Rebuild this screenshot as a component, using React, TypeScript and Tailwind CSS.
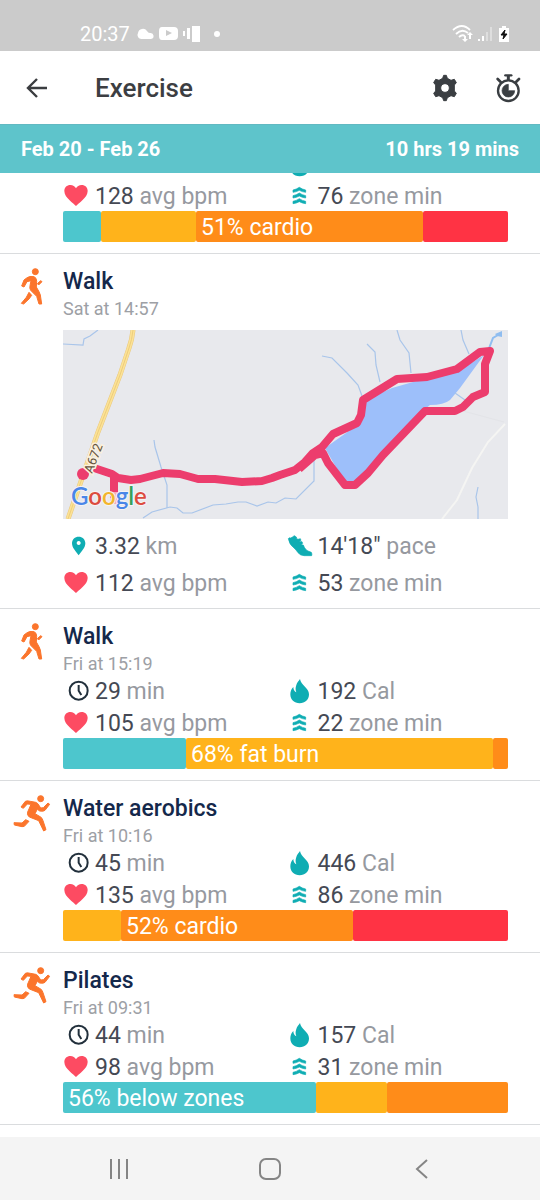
import type { ReactNode } from "react";

type Zone = { size: number; color: string; label?: string };

type StatData = { icon: ReactNode; value?: string; unit?: string };

const TEAL = "bg-[#4dc6cd]";
const YELLOW = "bg-[#ffb31b]";
const ORANGE = "bg-[#ff8c19]";
const RED = "bg-[#ff3344]";

/* ---------- stat icons ---------- */

function StatIcon({ children }: { children: ReactNode }) {
  return (
    <svg viewBox="0 0 84 84" className="h-7 w-7 shrink-0" aria-hidden="true">
      {children}
    </svg>
  );
}

const heart = (
  <StatIcon>
    <path
      fill="#fd4b62"
      d="M39 72 C33 64 4 48 4 27 C4 16 12 9 22 9 C30 9 36 13 39 19 C42 13 48 9 56 9 C66 9 74 16 74 27 C74 48 45 64 39 72Z"
    />
  </StatIcon>
);

const zone = (
  <StatIcon>
    <g fill="#0fadb3" stroke="#0fadb3" strokeWidth="2" strokeLinejoin="round">
      <path d="M40 16 Q49 22 59 24 V31 Q49 30 40 25 Q31 30 21 31 V24 Q31 22 40 16Z" />
      <path d="M40 33 Q49 39 59 41 V48 Q49 47 40 42 Q31 47 21 48 V41 Q31 39 40 33Z" />
      <path d="M40 50 Q49 56 59 58 V65 Q49 64 40 59 Q31 64 21 65 V58 Q31 56 40 50Z" />
    </g>
  </StatIcon>
);

const flame = (
  <StatIcon>
    <path
      fill="#0fadb3"
      d="M42 6 C44 24 69 33 69 52 C69 68 57 79 41 79 C25 79 13 68 13 52 C13 43 16 36 22 30 C22 37 25 43 31 46 C28 38 28 32 31 24 C33 17 38 12 42 6Z"
    />
  </StatIcon>
);

const clock = (
  <StatIcon>
    <g fill="none" stroke="#22303c" strokeWidth="6">
      <circle cx="47" cy="41" r="27" />
      <path d="M47 24 V41 L55 54" />
    </g>
  </StatIcon>
);

const pin = (
  <StatIcon>
    <path
      fill="#0fadb3"
      fillRule="evenodd"
      d="M47 70 C38 58 27 47 27 34 C27 22 36 14 47 14 C58 14 67 22 67 34 C67 47 56 58 47 70Z M47 27 a6 6 0 1 0 0.1 0Z"
    />
  </StatIcon>
);

const shoe = (
  <StatIcon>
    <path
      fill="#0fadb3"
      stroke="#0fadb3"
      strokeWidth="2"
      strokeLinejoin="round"
      d="M7 20 Q9 16 14 18 Q20 15 25 11 L31 15 Q31 22 36 22 L43 20 L45 25 L40 29 L48 29 L50 34 L45 38 L52 39 L55 46 Q60 55 66 57 L76 61 Q79 66 77 71 H54 Q42 70 36 62 Q30 53 24 48 Q10 38 7 20Z"
    />
  </StatIcon>
);

/* ---------- activity icons ---------- */

function WalkIcon() {
  return (
    <svg viewBox="0 0 72 117" className="h-[39px] w-6" aria-hidden="true">
      <g fill="#fb752c" stroke="#fb752c" strokeWidth="3" strokeLinejoin="round">
        <circle cx="46" cy="14" r="9" />
        <path d="M20 33 Q28 26 42 29 Q50 32 50 43 L49 60 Q59 76 61 84 L65 111 H57 L50 88 L32 70 Q28 64 30 56 L33 41 L21 44 L12 60 L5 57 L12 39Z" />
        <path d="M27 76 L35 85 L27 96 L11 111 L4 109 L19 91Z" />
        <path d="M52 50 L62 41 L66 44 L56 54Z" />
      </g>
    </svg>
  );
}

function RunIcon() {
  return (
    <svg viewBox="0 0 114 117" className="h-[39px] w-[38px]" aria-hidden="true">
      <g fill="#fb752c" stroke="#fb752c" strokeWidth="3" strokeLinejoin="round">
        <circle cx="83" cy="14" r="9" />
        <path d="M24 39 L37 22 Q42 19 52 22 L68 25 Q74 27 78 34 L83 42 L91 41 L105 27 L110 31 L96 49 Q92 53 80 51 L73 46 L66 59 L83 69 Q88 72 90 80 L99 107 L92 111 L77 80 L49 69 Q41 63 44 54 L54 31 L43 30 L31 43Z" />
        <path d="M3 86 L27 87 L38 77 L48 82 L34 97 L27 98 L4 93Z" />
      </g>
    </svg>
  );
}

/* ---------- route map ---------- */

function RouteMap() {
  return (
    <svg viewBox="0 0 445 189" className="mt-2.5 block w-full bg-[#e8e9ed]" role="img" aria-label="Route map">
      <path
        fill="#9dbffa"
        d="M262 118 L297 93 L302 70 L329 58 L350 52 L394 42 L421 25 L397 58 L387 70 Q381 75 367 75 L362 79 L320 125 L292 153 L282 153Z"
      />
      <g fill="none" stroke="#a9c5ea" strokeWidth="1.2">
        <path d="M0 14 L20 15 L21 9 L27 6 L35 0" />
        <path d="M91 110 L92 117 L98 137 L104 155 V178" />
        <path d="M80 188 L89 182 L107 177 L114 178 L120 183 L129 183 L150 175 L163 174 L175 172 L183 172 L194 176 L205 172 L213 173 L222 168 L233 169 L251 151 V130" />
        <path d="M259 26 L269 28 L284 43 L295 55 L299 66" />
        <path d="M304 14 L312 22 L313 35 L317 52" />
        <path d="M334 0 L337 10 L346 23 L348 43" />
        <path d="M398 0 L400 10 L406 24" />
        <path d="M392 63 L402 70" />
        <path d="M415 157 L413 167 L415 177 V189" />
      </g>
      <path d="M425 21 L430 8 L435 5" fill="none" stroke="#8fbdf0" strokeWidth="2" />
      <path d="M432 4 L439 1 V7 L434 6Z" fill="#8fbdf0" />
      <path d="M400 81 L441 92" stroke="#e3e4e8" strokeWidth="1" />
      <path d="M442 94 L425 112 L409 138 L394 170 L379 189" fill="none" stroke="#f5f5f3" strokeWidth="2" />
      <g fill="none">
        <path d="M70 0 Q69 10 66 18 L57 45 L35 102 L5 189" stroke="#e9c87c" strokeWidth="5" />
        <path d="M70 0 Q69 10 66 18 L57 45 L35 102 L5 189" stroke="#fce296" strokeWidth="4" />
        <path d="M70 0 Q69 10 66 18 L57 45 L35 102 L5 189" stroke="#edcd7c" strokeWidth="1" />
      </g>
      <circle cx="20" cy="144" r="6" fill="#ec3d6d" />
      <g fill="none" stroke="#ec3d6d" strokeWidth="8" strokeLinejoin="round">
        <path d="M31 138 L49 144 L55 148 L68 150 L77 149 L100 143 L117 144 L135 149 L152 149 L179 152 L199 151 L209 148 L217 145 L232 140 L242 132 L250 123 L259 117 L270 104 L294 93 L298 85 L300 70 L334 49 L364 47 L394 39 L417 22 L427 21 L422 34 V62 L410 67 L400 77 L392 81 H362 L320 125 L305 143 L292 155 H282 L265 133 L260 123 L252 125 L236 139" />
        <path d="M51 145 V168" />
      </g>
      <path d="M51 162 V174" stroke="#f9a9b4" strokeWidth="7" />
      <text
        transform="translate(29 144) rotate(-69)"
        className="fill-[#65543c] stroke-[#faf0dc] font-[Roboto] text-[13px] [paint-order:stroke] [stroke-width:3px]"
      >
        A672
      </text>
      <text
        x="8"
        y="175"
        className="stroke-[#f6f2f4] font-[Lato] text-[24px] font-semibold [paint-order:stroke] [stroke-width:2px]"
      >
        <tspan fill="#4a86e8">G</tspan>
        <tspan fill="#dc4c3f">o</tspan>
        <tspan fill="#f2b52b">o</tspan>
        <tspan fill="#4a86e8">g</tspan>
        <tspan fill="#35a25a">l</tspan>
        <tspan fill="#dc4c3f">e</tspan>
      </text>
    </svg>
  );
}

/* ---------- list pieces ---------- */

function Stats({ items, roomy }: { items: StatData[]; roomy?: boolean }) {
  return (
    <div className={roomy ? "mt-2 grid grid-cols-2" : "grid grid-cols-2"}>
      {items.map((s, i) => (
        <div key={i} className={roomy ? "flex h-[37px] items-center gap-1" : "flex h-8 items-center gap-1"}>
          {s.icon}
          {s.value && (
            <span className="whitespace-nowrap pt-0.5 text-[23px] leading-8 text-[#96999f]">
              <span className="text-[#454954]">{s.value}</span> {s.unit}
            </span>
          )}
        </div>
      ))}
    </div>
  );
}

function ZoneBar({ zones }: { zones: Zone[] }) {
  return (
    <div className="-mt-px mb-[11px] flex h-[31px]">
      {zones.map((z, i) => (
        <div
          key={i}
          className={`min-w-0 basis-0 overflow-hidden whitespace-nowrap rounded-xs text-[23px] leading-[33px] text-white ${z.color}`}
          style={{ flexGrow: z.size }}
        >
          {z.label && <span className="pl-[5px]">{z.label}</span>}
        </div>
      ))}
    </div>
  );
}

function Activity({
  icon,
  title,
  time,
  children,
}: {
  icon: ReactNode;
  title: string;
  time: string;
  children: ReactNode;
}) {
  return (
    <li className="flex border-b border-[#dadcde] pt-[13px] pr-8">
      <div className="flex w-[63px] shrink-0 items-start justify-center">{icon}</div>
      <div className="min-w-0 flex-1">
        <h2 className="text-[23px] leading-[30px] font-medium text-[#14284b]">{title}</h2>
        <p className="text-[18px] leading-[23px] text-[#9da0a5]">{time}</p>
        {children}
      </div>
    </li>
  );
}

function StatusBar() {
  return (
    <div className="flex h-[51px] items-center justify-between bg-[#cbcbcb] pt-4 pr-7 pl-20 text-white">
      <div className="flex items-center">
        <span className="text-[20px] leading-6">20:37</span>
        <svg viewBox="0 0 88 20" className="ml-1.5 h-5 w-[88px]" fill="#fff" aria-hidden="true">
          <path d="M6 15 A4 4 0 0 1 2 9 A5 5 0 0 1 11 7 Q12 9 14 9 A3 3 0 0 1 15 15Z" />
          <path
            fillRule="evenodd"
            d="M26 3 H38 Q42 3 42 7 V12 Q42 16 38 16 H26 Q23 16 23 12 V7 Q23 3 26 3Z M30 6 V12 L36 9Z"
          />
          <rect x="56" y="2" width="8" height="16" />
          <rect x="51" y="4" width="3" height="11" />
          <rect x="47" y="7" width="2" height="5" />
          <circle cx="81" cy="10" r="3" />
        </svg>
      </div>
      <svg viewBox="0 0 60 20" className="h-5 w-[60px]" fill="none" aria-hidden="true">
        <g stroke="#fff" strokeWidth="1.8">
          <path d="M1 6 Q10 -2 18 6" />
          <path d="M4 10 Q10 4 16 9" />
          <path d="M7 13 Q10 10 13 12" />
        </g>
        <path d="M12 12 H14 V15 H16 L13 18 L10 15 H12Z M18 8 L21 11 H19 V15 H17 V11 H15Z" fill="#fff" />
        <path d="M27 17 V15 M31 17 V12" stroke="#fff" strokeWidth="2" />
        <path d="M35 17 V8 M39 17 V3" stroke="#dedede" strokeWidth="2" />
        <path d="M47 4 H50 V2 H54 V4 H57 V18 H47Z" fill="#fff" />
        <path d="M53 6 L49 11 H52 L51 15 L55 10 H52Z" fill="#111" stroke="#111" />
      </svg>
    </div>
  );
}

function Header() {
  return (
    <header className="flex h-[73px] items-center bg-white pr-[18px] pl-6">
      <button aria-label="Back">
        <svg viewBox="0 0 26 26" className="h-[26px] w-[26px]" fill="none" stroke="#3b3d40" strokeWidth="2.4" aria-hidden="true">
          <path d="M23 13 H4 M13 4 L4 13 L13 22" />
        </svg>
      </button>
      <h1 className="ml-[45px] text-[26px] leading-8 font-medium text-[#3c3e42]">Exercise</h1>
      <button aria-label="Settings" className="ml-auto">
        <svg viewBox="0 0 84 84" className="h-7 w-7" fill="#3a3e42" aria-hidden="true">
          <path
            fillRule="evenodd"
            stroke="#3a3e42"
            strokeWidth="3"
            strokeLinejoin="round"
            d="M38 4 H46 L49 13 L60 19 L70 16 L76 26 L70 33 V51 L76 58 L70 68 L60 65 L49 71 L46 80 H38 L35 71 L24 65 L14 68 L8 58 L14 51 V33 L8 26 L14 16 L24 19 L35 13Z M42 29 a13 13 0 1 0 0.1 0Z"
          />
        </svg>
      </button>
      <button aria-label="Timer" className="ml-[35px]">
        <svg viewBox="0 0 84 90" className="h-[30px] w-7" fill="none" stroke="#3a3e42" aria-hidden="true">
          <circle cx="43" cy="53" r="31" strokeWidth="7" />
          <path d="M34 7 H52" strokeWidth="7" strokeLinecap="round" />
          <path d="M43 8 V22" strokeWidth="9" />
          <path d="M11 18 L20 27 M75 18 L66 27" strokeWidth="8" strokeLinecap="round" />
          <path d="M43 34 V53 H62 A19 19 0 1 1 43 34Z" fill="#3a3e42" strokeWidth="2" />
        </svg>
      </button>
    </header>
  );
}

function NavBar() {
  return (
    <nav className="flex h-[63px] shrink-0 items-center bg-[#f4f4f4] px-11">
      <button aria-label="Recent apps" className="flex flex-1 justify-center">
        <svg viewBox="0 0 24 24" className="h-6 w-6" stroke="#858585" strokeWidth="2" aria-hidden="true">
          <path d="M4 2 V22 M12 2 V22 M20 2 V22" />
        </svg>
      </button>
      <button aria-label="Home" className="flex flex-1 justify-center">
        <svg viewBox="0 0 24 24" className="h-6 w-6" fill="none" stroke="#858585" strokeWidth="2" aria-hidden="true">
          <rect x="2" y="2" width="20" height="20" rx="6" />
        </svg>
      </button>
      <button aria-label="Go back" className="flex flex-1 justify-center">
        <svg viewBox="0 0 24 24" className="h-6 w-6" fill="none" stroke="#858585" strokeWidth="2" aria-hidden="true">
          <path d="M18 3 L8 12 L18 21" />
        </svg>
      </button>
    </nav>
  );
}

export default function App() {
  return (
    <div className="flex min-h-screen flex-col bg-white font-[Roboto,sans-serif]">
      <StatusBar />
      <Header />
      <div className="flex h-[49px] items-center justify-between border-t border-[#62b9c2] bg-[#5ec4cb] px-[21px] text-[20px] leading-6 font-bold text-white">
        <span>Feb 20 - Feb 26</span>
        <span>10 hrs 19 mins</span>
      </div>

      <main className="flex-1 overflow-hidden">
        <ul>
          {/* scrolled partly under the week header */}
          <li className="-mt-[25px] border-b border-[#dadcde] pr-8 pl-[63px]">
            <Stats
              items={[
                { icon: <span /> },
                { icon: flame },
                { icon: heart, value: "128", unit: "avg bpm" },
                { icon: zone, value: "76", unit: "zone min" },
              ]}
            />
            <ZoneBar
              zones={[
                { size: 38, color: TEAL },
                { size: 95, color: YELLOW },
                { size: 227, color: ORANGE, label: "51% cardio" },
                { size: 85, color: RED },
              ]}
            />
          </li>

          <Activity icon={<WalkIcon />} title="Walk" time="Sat at 14:57">
            <RouteMap />
            <div className="pb-[7px]">
              <Stats
                roomy
                items={[
                  { icon: pin, value: "3.32", unit: "km" },
                  { icon: shoe, value: "14'18\"", unit: "pace" },
                  { icon: heart, value: "112", unit: "avg bpm" },
                  { icon: zone, value: "53", unit: "zone min" },
                ]}
              />
            </div>
          </Activity>

          <Activity icon={<WalkIcon />} title="Walk" time="Fri at 15:19">
            <Stats
              items={[
                { icon: clock, value: "29", unit: "min" },
                { icon: flame, value: "192", unit: "Cal" },
                { icon: heart, value: "105", unit: "avg bpm" },
                { icon: zone, value: "22", unit: "zone min" },
              ]}
            />
            <ZoneBar
              zones={[
                { size: 123, color: TEAL },
                { size: 307, color: YELLOW, label: "68% fat burn" },
                { size: 15, color: ORANGE },
              ]}
            />
          </Activity>

          <Activity icon={<RunIcon />} title="Water aerobics" time="Fri at 10:16">
            <Stats
              items={[
                { icon: clock, value: "45", unit: "min" },
                { icon: flame, value: "446", unit: "Cal" },
                { icon: heart, value: "135", unit: "avg bpm" },
                { icon: zone, value: "86", unit: "zone min" },
              ]}
            />
            <ZoneBar
              zones={[
                { size: 58, color: YELLOW },
                { size: 232, color: ORANGE, label: "52% cardio" },
                { size: 155, color: RED },
              ]}
            />
          </Activity>

          <Activity icon={<RunIcon />} title="Pilates" time="Fri at 09:31">
            <Stats
              items={[
                { icon: clock, value: "44", unit: "min" },
                { icon: flame, value: "157", unit: "Cal" },
                { icon: heart, value: "98", unit: "avg bpm" },
                { icon: zone, value: "31", unit: "zone min" },
              ]}
            />
            <ZoneBar
              zones={[
                { size: 253, color: TEAL, label: "56% below zones" },
                { size: 71, color: YELLOW },
                { size: 121, color: ORANGE },
              ]}
            />
          </Activity>
        </ul>
      </main>

      <NavBar />
    </div>
  );
}
